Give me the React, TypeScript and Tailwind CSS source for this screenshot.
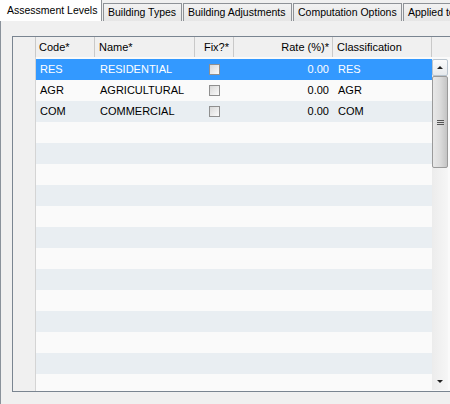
import React from 'react'

type Row = { code: string; name: string; rate: string; cls: string }

const rows: Row[] = [
  { code: 'RES', name: 'RESIDENTIAL', rate: '0.00', cls: 'RES' },
  { code: 'AGR', name: 'AGRICULTURAL', rate: '0.00', cls: 'AGR' },
  { code: 'COM', name: 'COMMERCIAL', rate: '0.00', cls: 'COM' },
]

const tabs = ['Building Types', 'Building Adjustments', 'Computation Options', 'Applied to']

function CheckBox() {
  return (
    <span className="block h-[11px] w-[11px] border border-[#8f8f8f] bg-gradient-to-br from-[#d8d8d8] to-[#fbfbfb]" />
  )
}

function ScrollBar() {
  return (
    <div className="flex h-full w-[16px] flex-col bg-gradient-to-r from-[#ececec] to-[#f6f6f6]">
      <div className="flex h-[17px] items-center justify-center rounded-[2px] border border-[#b9c4ce] bg-gradient-to-b from-[#fbfbfb] to-[#e6e9ec]">
        <span className="h-0 w-0 border-x-[3px] border-b-[3px] border-x-transparent border-b-[#222]" />
      </div>
      <div className="flex h-[92px] items-center justify-center rounded-[2px] border border-[#9a9a9a] bg-gradient-to-r from-[#e8e8e8] via-[#dcdcdc] to-[#c4c4c4]">
        <div className="flex w-[7px] flex-col gap-[1px]">
          <span className="h-[1px] bg-[#555]" />
          <span className="h-[1px] bg-[#555]" />
          <span className="h-[1px] bg-[#555]" />
        </div>
      </div>
      <div className="flex-1" />
      <div className="flex h-[18px] items-center justify-center">
        <span className="h-0 w-0 border-x-[3px] border-t-[3px] border-x-transparent border-t-[#222]" />
      </div>
    </div>
  )
}

export default function App() {
  const blanks = Array.from({ length: 16 })
  return (
    <div className="flex h-[404px] w-[450px] flex-col overflow-hidden whitespace-nowrap bg-[#f0f0f0] font-['Liberation_Sans',Arial,sans-serif] text-[11px] text-black">
      <div className="flex h-[21px] shrink-0 items-end text-[10.5px]">
        <div className="flex h-[21px] w-[102px] shrink-0 items-center border-r border-[#8e9297] bg-white pl-[7px]">
          Assessment Levels
        </div>
        {tabs.map((t, i) => (
          <div
            key={t}
            className={`ml-[1px] flex h-[18px] shrink-0 items-center overflow-hidden border border-b-0 border-[#8e9297] bg-gradient-to-b from-[#f2f2f2] to-[#e6e6e6] px-[4px] ${
              i === 0 ? 'w-[79px]' : 'w-[109px]'
            }`}
          >
            {t}
          </div>
        ))}
      </div>
      <div className="flex flex-1 border-l border-[#8a929b] pl-[11px] pt-[15px]">
        <div className="flex h-[356px] w-[460px] shrink-0 flex-col border border-[#7a8591] bg-[#fafafa]">
          <div className="flex h-[20px] shrink-0 bg-[#f0f0f0]">
            <div className="w-[23px] border-r border-[#c9c9c9]" />
            <div className="flex w-[59px] items-center border-r border-[#c9c9c9] pl-[3px]">Code*</div>
            <div className="flex w-[100px] items-center border-r border-[#c9c9c9] pl-[4px]">Name*</div>
            <div className="flex w-[39px] items-center justify-end border-r border-[#c9c9c9] pr-[4px]">Fix?*</div>
            <div className="flex w-[99px] items-center justify-end border-r border-[#c9c9c9] pr-[3px]">Rate (%)*</div>
            <div className="flex w-[99px] items-center border-r border-[#c9c9c9] pl-[4px]">Classification</div>
            <div className="flex-1" />
          </div>
          <div className="flex flex-1 overflow-hidden">
            <div className="w-[23px] shrink-0 border-r border-[#d4d4d4] bg-[#f0f0f0]" />
            <div className="flex w-[396px] shrink-0 flex-col pt-[2px]">
              {rows.map((r, i) => (
                <div
                  key={r.code}
                  className={`flex h-[21px] shrink-0 items-center ${
                    i === 0 ? 'bg-[#3399ff] text-white' : i % 2 === 0 ? 'bg-[#e9eef2]' : 'bg-[#fafafa]'
                  }`}
                >
                  <div className="w-[59px] pl-[4px]">{r.code}</div>
                  <div className="w-[100px] pl-[5px]">{r.name}</div>
                  <div className="flex w-[39px] justify-center">
                    <CheckBox />
                  </div>
                  <div className="w-[99px] pr-[4px] text-right">{r.rate}</div>
                  <div className="w-[99px] pl-[5px]">{r.cls}</div>
                </div>
              ))}
              {blanks.map((_, j) => (
                <div
                  key={j}
                  className={`h-[21px] shrink-0 ${(j + 3) % 2 === 0 ? 'bg-[#e9eef2]' : 'bg-[#fafafa]'}`}
                />
              ))}
            </div>
            <div className="shrink-0 pt-[2px] pb-[1px]">
              <ScrollBar />
            </div>
          </div>
        </div>
      </div>
    </div>
  )
}
